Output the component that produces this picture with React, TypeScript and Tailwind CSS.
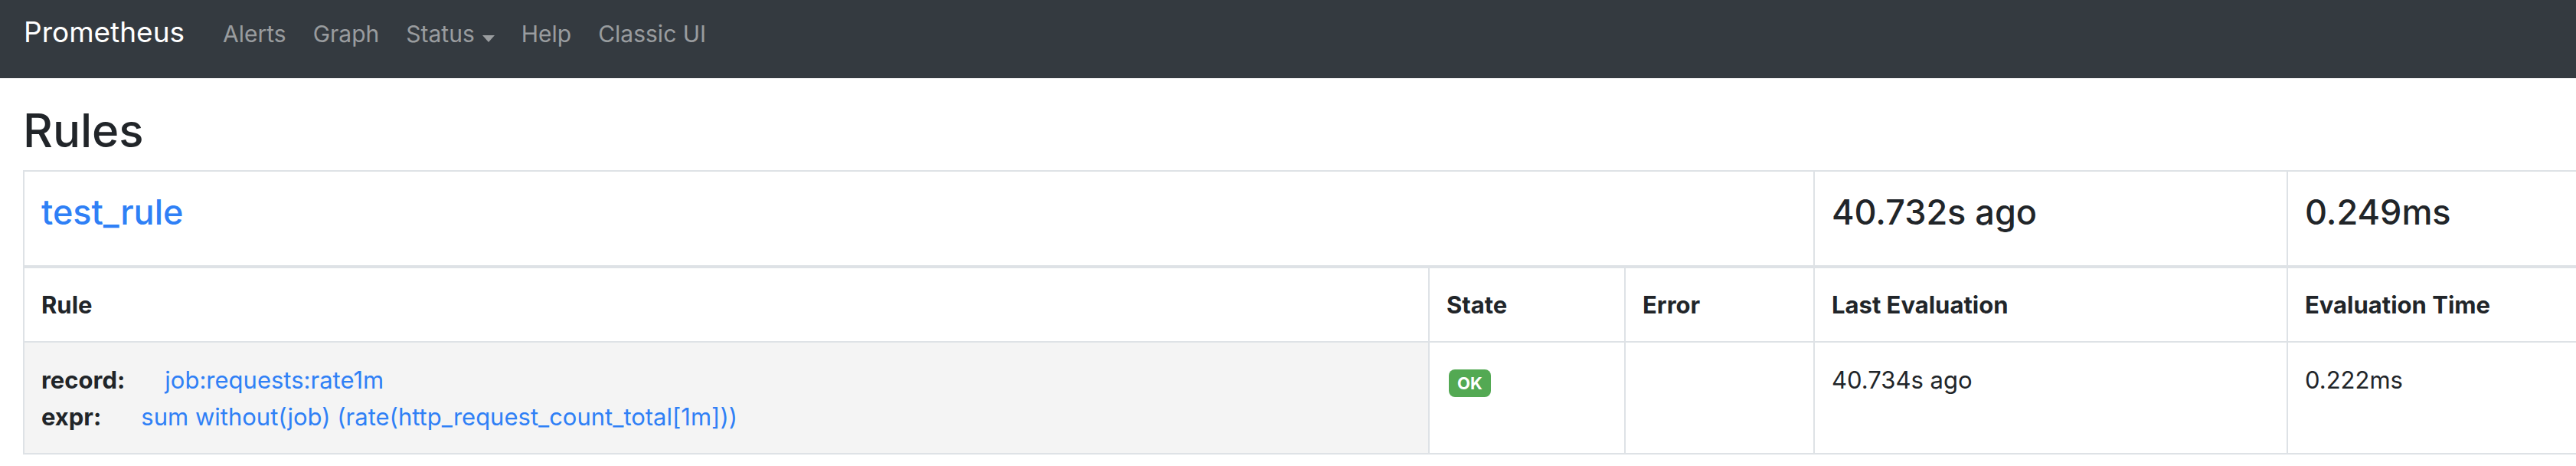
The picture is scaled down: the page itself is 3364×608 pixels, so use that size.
const navLinks = ["Alerts", "Graph", "Status", "Help", "Classic UI"];

const cell = "border-r-2 border-[#dee2e6] pl-[22px]";

export default function App() {
  return (
    <div className="min-h-screen w-full overflow-hidden bg-white text-[#212529] [font-family:Inter,sans-serif]">
      {/* Navbar */}
      <nav className="flex h-[102px] items-baseline bg-[#343a40] px-[31px] pt-[20px]">
        <span className="mr-[50px] text-[37px] leading-[44px] text-white">Prometheus</span>
        <div className="flex items-baseline gap-[35px] text-[30px] leading-[44px] text-white/50">
          {navLinks.map((l) =>
            l === "Status" ? (
              <span key={l} className="flex items-baseline">
                {l}
                <span className="mb-[10px] ml-[10px] inline-block border-x-[8px] border-t-[9px] border-x-transparent border-t-current" />
              </span>
            ) : (
              <span key={l}>{l}</span>
            )
          )}
        </div>
      </nav>

      <div className="px-[30px]">
        <h1 className="mt-[32px] mb-[16px] text-[60px] leading-[72px] font-medium">Rules</h1>

        <div className="grid w-max grid-cols-[1835px_256px_247px_618px_618px] border-l-2 border-t-2 border-[#dee2e6]">
          {/* Group header */}
          <div className={`${cell} col-span-3 h-[126px] border-b-4 pt-[26px]`}>
            <span className="text-[45px] leading-[53px] font-medium text-[#2f80f6]">test_rule</span>
          </div>
          <div className={`${cell} h-[126px] border-b-4 pt-[26px] text-[45px] leading-[53px] font-medium`}>40.732s ago</div>
          <div className={`${cell} h-[126px] border-b-4 pt-[26px] text-[45px] leading-[53px] font-medium`}>0.249ms</div>

          {/* Column labels */}
          {["Rule", "State", "Error", "Last Evaluation", "Evaluation Time"].map((h) => (
            <div key={h} className={`${cell} h-[97px] border-b-2 pt-[24px] text-[31px] leading-[48px] font-bold`}>
              {h}
            </div>
          ))}

          {/* Rule row */}
          <div className={`${cell} h-[146px] border-b-2 bg-[#f4f4f4] pt-[25px] text-[31px] leading-[48px]`}>
            <div>
              <b className="font-bold">record:</b>
              <span className="ml-[52px] text-[#2f80f6]">job:requests:rate1m</span>
            </div>
            <div>
              <b className="font-bold">expr:</b>
              <span className="ml-[52px] text-[#2f80f6]">sum without(job) (rate(http_request_count_total[1m]))</span>
            </div>
          </div>
          <div className={`${cell} h-[146px] border-b-2 pt-[35px] pl-[25px]`}>
            <span className="inline-flex h-[36px] items-center rounded-[8px] bg-[#53a953] px-[11px] text-[22px] font-bold text-white">
              OK
            </span>
          </div>
          <div className={`${cell} h-[146px] border-b-2`} />
          <div className={`${cell} h-[146px] border-b-2 pt-[25px] text-[31px] leading-[48px]`}>40.734s ago</div>
          <div className={`${cell} h-[146px] border-b-2 pt-[25px] text-[31px] leading-[48px]`}>0.222ms</div>
        </div>
      </div>
    </div>
  );
}
